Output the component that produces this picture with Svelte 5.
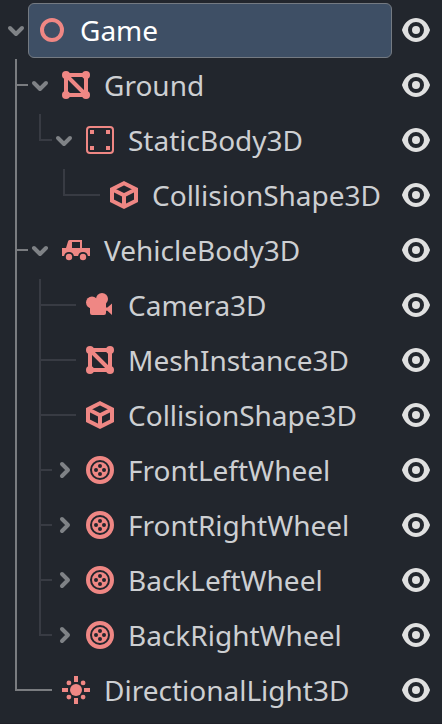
<script>
  const nodes = [
    { name: 'Game', icon: 'node', depth: 0, fold: 'open', selected: true },
    { name: 'Ground', icon: 'mesh', depth: 1, fold: 'open' },
    { name: 'StaticBody3D', icon: 'static', depth: 2, fold: 'open' },
    { name: 'CollisionShape3D', icon: 'shape', depth: 3 },
    { name: 'VehicleBody3D', icon: 'vehicle', depth: 1, fold: 'open' },
    { name: 'Camera3D', icon: 'camera', depth: 2 },
    { name: 'MeshInstance3D', icon: 'mesh', depth: 2 },
    { name: 'CollisionShape3D', icon: 'shape', depth: 2 },
    { name: 'FrontLeftWheel', icon: 'wheel', depth: 2, fold: 'closed' },
    { name: 'FrontRightWheel', icon: 'wheel', depth: 2, fold: 'closed' },
    { name: 'BackLeftWheel', icon: 'wheel', depth: 2, fold: 'closed' },
    { name: 'BackRightWheel', icon: 'wheel', depth: 2, fold: 'closed' },
    { name: 'DirectionalLight3D', icon: 'light', depth: 1 }
  ];

  // Is there a later sibling at this depth before the branch closes?
  function continues(index, depth) {
    for (let i = index + 1; i < nodes.length; i++) {
      if (nodes[i].depth < depth) return false;
      if (nodes[i].depth === depth) return true;
    }
    return false;
  }

  const rows = nodes.map((node, i) => {
    const guides = [];
    for (let level = 1; level <= node.depth; level++) {
      const own = level === node.depth;
      const more = continues(i, level);
      if (!own && !more) continue;
      const x = 24 * level - 8;
      const first = nodes[i - 1].depth < level;
      guides.push({
        strong: level === 1,
        x,
        top: first ? 1 : 0,
        bottom: more ? 55 : 28,
        branch: own ? x + (node.fold ? 12 : 36) : 0
      });
    }
    return { ...node, guides };
  });
</script>

<div class="tree" role="tree">
  {#each rows as row}
    <div class="row" role="treeitem" aria-selected={!!row.selected}>
      <svg class="guides" width="120" height="55" aria-hidden="true">
        {#each row.guides as g}
          <g class:strong={g.strong}>
            <rect x={g.x - 1} y={g.top} width="2" height={g.bottom - g.top} />
            {#if g.branch}
              <rect x={g.x + 1} y="26" width={g.branch - g.x - 1} height="2" />
            {/if}
          </g>
        {/each}
      </svg>
      <div class="indent" style:width="{row.depth * 24}px"></div>
      <div class="fold">
        {#if row.fold}
          <svg width="24" height="24" viewBox="0 0 24 24">
            {#if row.fold === 'open'}
              <path d="M6 10l6 6 6-6" />
            {:else}
              <path d="M10 6l6 6-6 6" />
            {/if}
          </svg>
        {/if}
      </div>
      <div class="item" class:selected={row.selected}>
        <svg class="icon" width="32" height="32" viewBox="0 0 16 16">
          {#if row.icon === 'node'}
            <circle cx="8" cy="8" r="5" fill="none" stroke="currentColor" stroke-width="2" />
          {:else if row.icon === 'mesh'}
            <path d="M3 3h10v10H3zM3 3l10 10" fill="none" stroke="currentColor" stroke-width="2" />
            <circle cx="3" cy="3" r="2" /><circle cx="13" cy="3" r="2" />
            <circle cx="3" cy="13" r="2" /><circle cx="13" cy="13" r="2" />
          {:else if row.icon === 'static'}
            <rect x="1.5" y="1.5" width="13" height="13" rx="1.5" fill="none" stroke="currentColor" />
            <path d="M3 3h2v2H3zm8 0h2v2h-2zM3 11h2v2H3zm8 0h2v2h-2z" />
          {:else if row.icon === 'shape'}
            <path d="M8 2.1l6 3v5.8l-6 3-6-3V5.1zM2 5.1l6 3 6-3M8 8.1v5.8" fill="none" stroke="currentColor" stroke-width="2" />
          {:else if row.icon === 'vehicle'}
            <path fill-rule="evenodd" d="M5 3h6v4h4v4h-1.050a2.500 2.500 0 0 0-4.900 0H6.950a2.500 2.500 0 0 0-4.900 0H1V7h2l1-3.300Q4.200 3 5 3zm1 1v3h4V4z" />
            <circle cx="4.5" cy="11.5" r="1.6" /><circle cx="11.5" cy="11.5" r="1.6" />
          {:else if row.icon === 'camera'}
            <circle cx="9" cy="5" r="3" />
            <circle cx="4" cy="6.8" r="3" />
            <path d="M4 5h5l2 2v2.300h.700L14 7.200V13l-2.300-2.100H11V12a1 1 0 0 1-1 1H4a1 1 0 0 1-1-1V7z" />
          {:else if row.icon === 'wheel'}
            <circle cx="8" cy="8" r="6" fill="none" stroke="currentColor" stroke-width="2" />
            <path fill-rule="evenodd" d="M8 4a4 4 0 0 0 0 8 4 4 0 0 0 0-8zm0 1a1 1 0 0 1 0 2 1 1 0 0 1 0-2zM6 7a1 1 0 0 1 0 2 1 1 0 0 1 0-2zm4 0a1 1 0 0 1 0 2 1 1 0 0 1 0-2zM8 9a1 1 0 0 1 0 2 1 1 0 0 1 0-2z" />
          {:else}
            <circle cx="8" cy="8" r="3" />
            <path d="M7 1h2v3H7zM7 12h2v3H7zM1 7h3v2H1zM12 7h3v2h-3z" />
            <circle cx="4.45" cy="4.45" r="1.2" /><circle cx="11.55" cy="4.45" r="1.2" />
            <circle cx="4.45" cy="11.55" r="1.2" /><circle cx="11.55" cy="11.55" r="1.2" />
          {/if}
        </svg>
        <span>{row.name}</span>
      </div>
      <svg class="eye" width="32" height="32" viewBox="0 0 16 16">
        <path fill-rule="evenodd" d="M8 2C5.3 2 2.4 3.8 1.05 7.7a1 1 0 0 0 0 .6C2.35 12.1 5.2 14 8 14s5.65-1.9 6.95-5.7a1 1 0 0 0 0-.6C13.6 3.8 10.7 2 8 2zm0 2a4 4 0 0 1 0 8 4 4 0 0 1 0-8zm0 2a2 2 0 0 0 0 4 2 2 0 0 0 0-4z" />
      </svg>
    </div>
  {/each}
</div>

<style>
  :global(body) {
    margin: 0;
    background: #22262d;
  }
  .tree {
    box-sizing: border-box;
    width: 442px;
    height: 724px;
    padding-top: 3px;
    overflow: hidden;
    background: #22262d;
    border-bottom: 1px solid #1f2028;
    font: 28px/38px 'Noto Sans', sans-serif;
    color: #cdcfd2;
  }
  .row {
    position: relative;
    display: flex;
    align-items: stretch;
    height: 55px;
  }
  .guides {
    position: absolute;
    left: 0;
    top: 0;
    fill: #383b43;
  }
  .guides .strong {
    fill: #7a7c80;
  }
  .indent {
    flex: none;
  }
  .fold {
    flex: none;
    width: 28px;
    padding: 15px 0 0 4px;
    box-sizing: border-box;
  }
  .fold svg {
    display: block;
    fill: none;
    stroke: #7f8286;
    stroke-width: 4;
    stroke-linecap: round;
    stroke-linejoin: round;
  }
  .item {
    flex: 1;
    min-width: 0;
    display: flex;
    align-items: flex-start;
    box-sizing: border-box;
    padding: 10px 0 0 7px;
    border: 1px solid transparent;
    border-radius: 6px;
    white-space: nowrap;
  }
  .item.selected {
    background: #3e4f65;
    border-color: #747a82;
    color: #fff;
  }
  .icon {
    flex: none;
    color: #ef8784;
    fill: currentColor;
  }
  .item span {
    margin: -3px 0 0 12px;
  }
  .eye {
    flex: none;
    margin: 11px 10px 0 8px;
    fill: #e0e0e0;
  }
</style>
